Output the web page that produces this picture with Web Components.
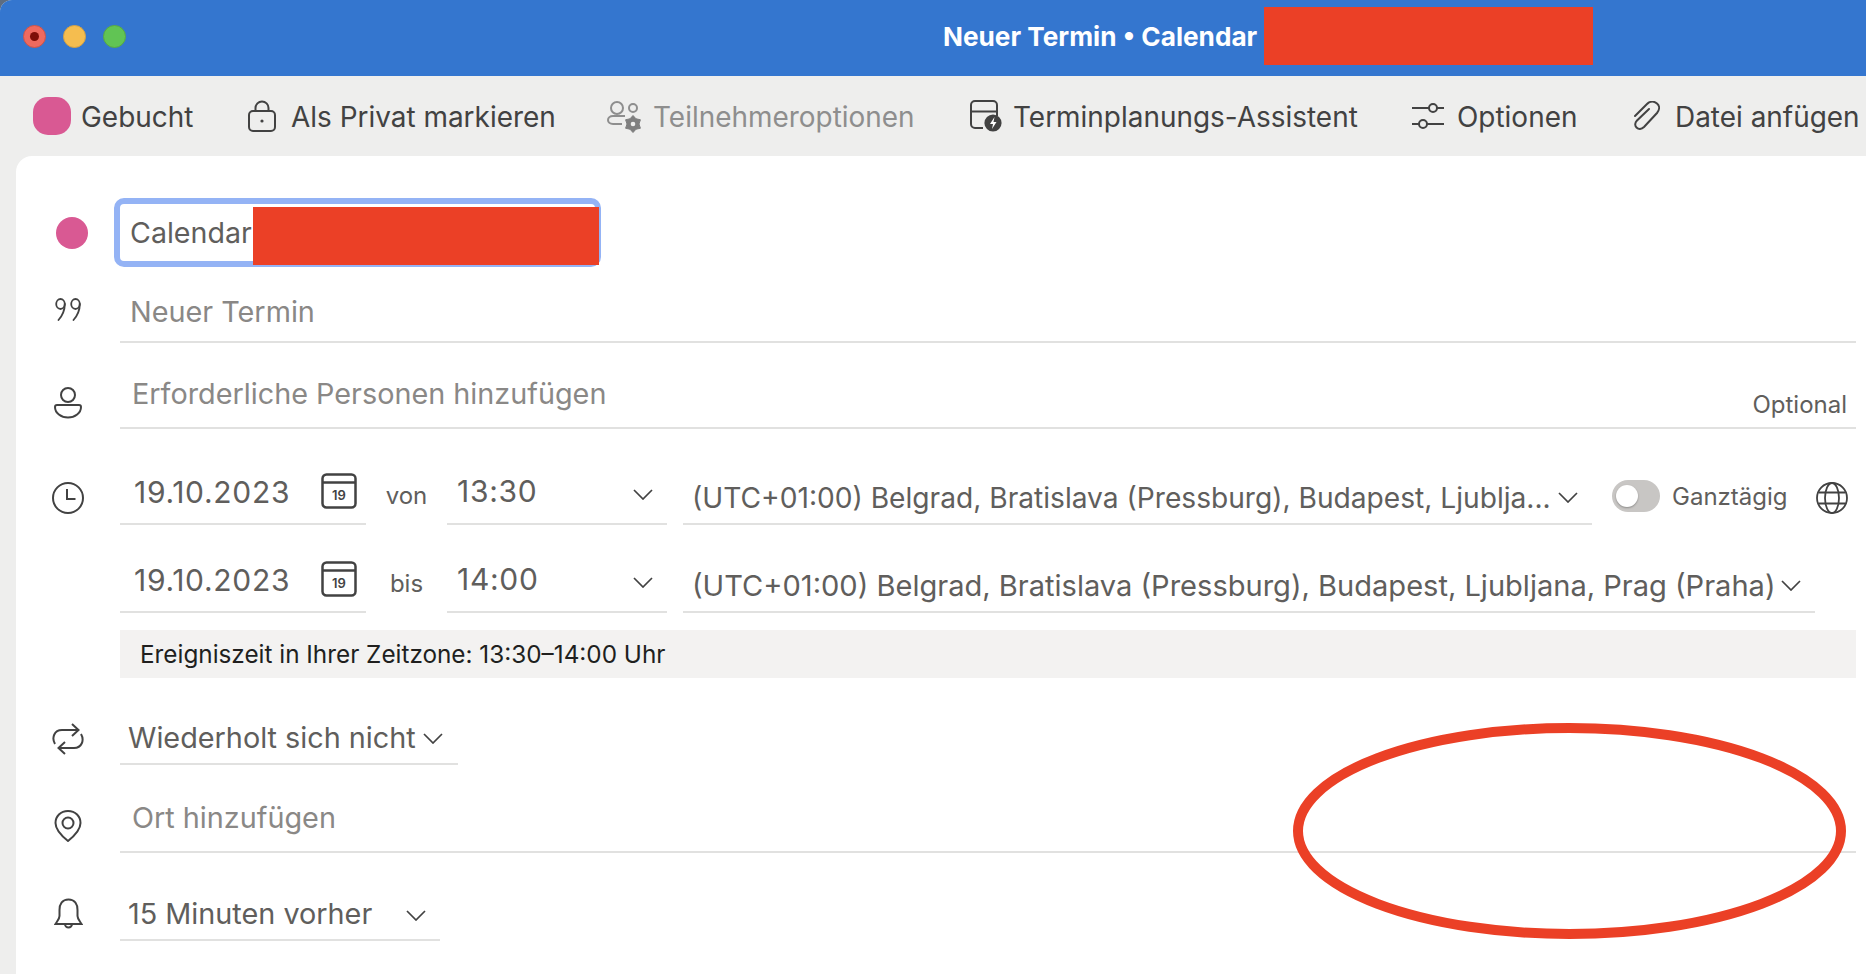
<!DOCTYPE html>
<html lang="de">
<head>
<meta charset="utf-8">
<title>Neuer Termin</title>
<style>
html,body{margin:0;padding:0;background:#5d6d82;}
body{font-family:Inter,"Liberation Sans",sans-serif;width:1866px;height:974px;overflow:hidden;}
svg{display:block;}
</style>
</head>
<body>
<app-window>
  <title-bar>
    <span slot="title">Neuer Termin • Calendar</span>
  </title-bar>
  <tool-bar>
    <tool-item style="margin-left:33px;width:165px;--g:10px">
      <span slot="icon" style="display:block;width:38px;height:38px;border-radius:15px;background:#d95993"></span>Gebucht
    </tool-item>
    <tool-item style="margin-left:50px;width:310px;--g:15px">
      <svg slot="icon" width="28" height="32" viewBox="0 0 28 32" fill="none" stroke="#424242" stroke-width="2"><rect x="1" y="11" width="26" height="20" rx="4"/><path d="M7.500 11V8a6.500 6.500 0 0 1 13 0v3"/><circle cx="14" cy="21" r="1.600" fill="#424242" stroke="none"/></svg>Als Privat markieren
    </tool-item>
    <tool-item disabled style="margin-left:49px;width:310px;--g:11px">
      <svg slot="icon" width="35" height="33" viewBox="0 0 35 33" fill="none" stroke="#8e8e8e" stroke-width="2"><circle cx="10" cy="8" r="6"/><circle cx="26" cy="8" r="4"/><path d="M18 16H6C3 16 1 18 1 20C1 22 3 24 6 24H15"/><polygon points="26,15.500 29,18.800 33.400,19.750 32,24 33.400,28.250 29,29.200 26,32.500 23,29.200 18.600,28.250 20,24 18.600,19.750 23,18.800" fill="#7f7f7f" stroke="#7f7f7f" stroke-width="1" stroke-linejoin="round"/><circle cx="26" cy="24" r="2.300" fill="#eeeeed" stroke="none"/></svg>Teilnehmeroptionen
    </tool-item>
    <tool-item style="margin-left:53px;width:392px;--g:11px">
      <svg slot="icon" width="32" height="32" viewBox="0 0 32 32" fill="none" stroke="#424242" stroke-width="2"><path d="M13 28H5a4 4 0 0 1-4-4V5a4 4 0 0 1 4-4h18a4 4 0 0 1 4 4v11"/><path d="M1 11.500h26"/><circle cx="23" cy="23" r="8.600" fill="#424242" stroke="none"/><path d="M24.500 17l-4.500 7h3l-1 5 4.500-7h-3z" fill="#fff" stroke="none"/></svg>Terminplanungs-Assistent
    </tool-item>
    <tool-item style="margin-left:50px;width:168px;--g:13px">
      <svg slot="icon" width="32" height="28" viewBox="0 0 32 28" fill="none" stroke="#424242" stroke-width="2"><path d="M0 6h17M25 6h7M0 22h7M15 22h17"/><circle cx="21" cy="6" r="4"/><circle cx="11" cy="22" r="4"/></svg>Optionen
    </tool-item>
    <tool-item style="margin-left:54px;width:228px;--g:15px">
      <svg slot="icon" width="26" height="30" viewBox="0 0 26 30" fill="none" stroke="#424242" stroke-width="2" stroke-linecap="round"><path d="M1 15L13 3C16 0 20 0 23 2.500C26 5 25.500 9 23 12L10 26C7.500 28.500 4.500 28.500 2.500 26.500C.5 24.500 1 21.500 3 19.500L15 8"/></svg>Datei anfügen
    </tool-item>
  </tool-bar>
  <form-panel>
    <form-row style="--h:69px;--top:19px">
      <span slot="icon" style="display:block;width:32px;height:32px;margin-left:8px;border-radius:50%;background:#d95993"></span>
      <subject-box>Calendar</subject-box>
    </form-row>
    <form-row style="--h:76px;--top:31px">
      <svg slot="icon" width="26" height="23" viewBox="0 0 26 23" fill="none" stroke="#424242" stroke-width="1.800" stroke-linecap="round"><ellipse cx="5.500" cy="6" rx="4.300" ry="5"/><path d="M9.800 6C9.800 12 7.500 17.500 3.500 22"/><ellipse cx="20.500" cy="6" rx="4.300" ry="5"/><path d="M24.800 6C24.800 12 22.500 17.500 18.500 22"/></svg>
      <form-field style="--pb:12px;--pl:10px;--c:#8a8886;flex:1">Neuer Termin</form-field>
    </form-row>
    <form-row style="--h:86px;--top:44px">
      <svg slot="icon" width="28" height="32" viewBox="0 0 28 32" fill="none" stroke="#424242" stroke-width="2"><circle cx="14" cy="8" r="7"/><path d="M3 18H25C26.500 18 27 19 27 20C27 26 21 30.500 14 30.500C7 30.500 1 26 1 20C1 19 1.500 18 3 18Z"/></svg>
      <form-field style="--pb:16px;--pl:12px;--c:#8a8886;--ib:8px;--ic:#605e5c;flex:1">Erforderliche Personen hinzufügen<span slot="end" style="font-size:24px;line-height:29px;margin-right:9px;display:block">Optional</span></form-field>
    </form-row>
    <form-row style="--h:96px;--top:53px">
      <svg slot="icon" width="32" height="32" viewBox="0 0 32 32" fill="none" stroke="#424242" stroke-width="2"><circle cx="16" cy="16" r="15"/><path d="M15 7v10h8.500"/></svg>
      <date-field style="--pb:14px" value="19.10.2023"></date-field>
      <field-label style="--pb:15px">von</field-label>
      <form-field style="--pb:15px;--pl:10px;--ib:23px;--pr:14px;--fs:30px;--ls:.7px;width:220px">13:30<chevron-icon slot="end"></chevron-icon></form-field>
      <form-field style="--pb:8px;--pl:9px;--ib:20px;--pr:14px;--fs:28.150px;width:909px;margin-left:16px;--gap:6px">(UTC+01:00) Belgrad, Bratislava (Pressburg), Budapest, Ljublja...<chevron-icon slot="end"></chevron-icon></form-field>
      <toggle-switch style="margin:0 0 13px 20px;align-self:flex-end"></toggle-switch>
      <field-label style="--pb:14px;--fw:auto;margin-left:12px">Ganztägig</field-label>
      <svg style="align-self:flex-end;margin:0 0 11px 28px" width="32" height="32" viewBox="0 0 32 32" fill="none" stroke="#424242" stroke-width="1.800"><circle cx="16" cy="16" r="15"/><ellipse cx="16" cy="16" rx="7" ry="15"/><path d="M2.500 10.500h27M2.500 21.500h27"/></svg>
    </form-row>
    <form-row style="--h:88px">
      <date-field style="--pb:14px" value="19.10.2023"></date-field>
      <field-label style="--pb:15px">bis</field-label>
      <form-field style="--pb:15px;--pl:10px;--ib:23px;--pr:14px;--fs:30px;--ls:.7px;width:220px">14:00<chevron-icon slot="end"></chevron-icon></form-field>
      <form-field style="--pb:8px;--pl:9px;--ib:20px;--pr:14px;--fs:29.050px;width:1132px;margin-left:16px">(UTC+01:00) Belgrad, Bratislava (Pressburg), Budapest, Ljubljana, Prag (Praha)<chevron-icon slot="end"></chevron-icon></form-field>
    </form-row>
    <info-bar>Ereigniszeit in Ihrer Zeitzone: 13:30–14:00 Uhr</info-bar>
    <form-row style="--h:87px;--top:45px">
      <svg slot="icon" width="32" height="32" viewBox="0 0 32 32" fill="none" stroke="#424242" stroke-width="2"><path d="M3 21C-.5 15 2 7 10 7H26M20 1L26.500 7L20 13"/><path d="M29 11C32.500 17 30 25 22 25H6M13 19L6.500 25L13 31"/></svg>
      <form-field style="--pb:8px;--pl:8px;--pr:13px;--ib:19px;width:338px;--gap:7px;justify-content:flex-start">Wiederholt sich nicht<chevron-icon slot="end"></chevron-icon></form-field>
    </form-row>
    <form-row style="--h:88px;--top:45px">
      <svg slot="icon" width="28" height="32" viewBox="0 0 28 32" fill="none" stroke="#424242" stroke-width="2"><path d="M14 1C6.500 1 1.500 6.500 1.500 13C1.500 20 9 27 14 31C19 27 26.500 20 26.500 13C26.500 6.500 21.500 1 14 1Z"/><circle cx="14" cy="13" r="5.500"/></svg>
      <form-field style="--pb:16px;--pl:12px;--c:#8a8886;flex:1">Ort hinzufügen</form-field>
    </form-row>
    <form-row style="--h:88px;--top:45px">
      <svg slot="icon" width="29" height="31" viewBox="0 0 29 31" fill="none" stroke="#424242" stroke-width="2"><path d="M14.500 1.500C8 1.500 5.500 6.500 5.500 12V18C5.500 21 3 23.500 1.500 26H27.500C26 23.500 23.500 21 23.500 18V12C23.500 6.500 21 1.500 14.500 1.500Z"/><path d="M11 26a3.500 3.500 0 0 0 7 0"/></svg>
      <form-field style="--pb:8px;--pl:8px;--pr:14px;--ib:18px;width:320px">15 Minuten vorher<chevron-icon slot="end"></chevron-icon></form-field>
    </form-row>
    <annotation-ring></annotation-ring>
  </form-panel>
</app-window>

<script>
function define(name, css, html, init){
  customElements.define(name, class extends HTMLElement{
    constructor(){
      super();
      const r=this.attachShadow({mode:'open'});
      r.innerHTML='<style>'+css+'</style>'+html;
    }
    connectedCallback(){ if(init) init(this); }
  });
}
define('app-window',
  ':host{display:flex;flex-direction:column;width:1866px;height:974px;background:#eeeeed;border-top-left-radius:12px;overflow:hidden;font-family:Inter,"Liberation Sans",sans-serif}',
  '<slot></slot>');
define('title-bar',
  ':host{display:flex;align-items:center;height:76px;box-sizing:border-box;padding-bottom:4px;flex:none;background:#3476cf;color:#fff;font-size:26.2px;font-weight:700}'+
  '.dot{width:23px;height:23px;border-radius:50%;box-sizing:border-box;margin-right:17px;display:flex;align-items:center;justify-content:center}'+
  '.r{background:#ee6a5f;border:1px solid #ce5347;margin-left:23px}.r i{display:block;width:9px;height:9px;border-radius:50%;background:#7e0f08}'+
  '.y{background:#f5bd4f;border:1px solid #d6a243}.g{background:#61c454;border:1px solid #58a942}'+
  '.t{margin-left:800px;white-space:nowrap;width:321px}'+
  '.red{width:329px;height:58px;background:#eb4026}',
  '<span class="dot r"><i></i></span><span class="dot y"></span><span class="dot g"></span><span class="t"><slot name="title"></slot></span><span class="red"></span>');
define('tool-bar',
  ':host{display:flex;align-items:center;height:80px;flex:none;background:#eeeeed}',
  '<slot></slot>');
define('tool-item',
  ':host{display:flex;align-items:center;gap:var(--g,10px);flex:none;font-size:27.95px;line-height:34px;color:#424242;white-space:nowrap;box-sizing:border-box}'+
  ':host([disabled]){color:#8e8e8e}span{position:relative;top:1px}::slotted([slot=icon]){flex:none}',
  '<slot name="icon"></slot><span><slot></slot></span>');
define('form-panel',
  ':host{display:block;position:relative;flex:1;margin-left:16px;padding:42px 10px 0 0;background:#fff;border-top-left-radius:16px;color:#605e5c;font-size:28.8px}',
  '<slot></slot>');
define('form-row',
  ':host{display:flex;height:var(--h);align-items:stretch}'+
  '.ic{flex:none;width:104px;box-sizing:border-box;padding-top:var(--top,0);display:flex;justify-content:center;align-items:flex-start}'+
  '.c{flex:1;min-width:0;display:flex;align-items:stretch}',
  '<div class="ic"><slot name="icon"></slot></div><div class="c"><slot></slot></div>');
define('form-field',
  ':host{display:flex;align-items:flex-end;justify-content:space-between;gap:var(--gap,0);box-sizing:border-box;border-bottom:2px solid #e1e1e0;padding:0 var(--pr,0) 0 var(--pl,0);color:var(--c,#605e5c);line-height:34px;white-space:nowrap;font-size:var(--fs,inherit);letter-spacing:var(--ls,0)}'+
  '.t{padding-bottom:var(--pb,0)}.e{padding-bottom:var(--ib,0);color:var(--ic,inherit);letter-spacing:0}',
  '<span class="t"><slot></slot></span><span class="e"><slot name="end"></slot></span>');
define('date-field',
  ':host{display:flex;flex:none;width:246px;box-sizing:border-box;align-items:flex-end;justify-content:space-between;border-bottom:2px solid #e1e1e0;padding:0 9px 0 14px;color:#605e5c;line-height:34px;font-size:30px;letter-spacing:.7px}'+
  '.t{padding-bottom:var(--pb,0)}svg{margin-bottom:14px;display:block}',
  '<span class="t"></span><svg width="36" height="36" viewBox="0 0 36 36" fill="none" stroke="#424242" stroke-width="2.500"><rect x="1.500" y="1.500" width="33" height="33" rx="4"/><path d="M1.500 9.500h33"/><text x="18" y="27" text-anchor="middle" font-family="Inter, Liberation Sans, sans-serif" font-size="13" font-weight="600" letter-spacing="0" fill="#424242" stroke="none">19</text></svg>',
  el=>{el.shadowRoot.querySelector('.t').textContent=el.getAttribute('value');});
define('field-label',
  ':host{display:flex;flex:none;width:var(--fw,81px);justify-content:center;align-items:flex-end;font-size:24px;line-height:29px;color:#605e5c;padding-bottom:var(--pb,0);box-sizing:border-box}',
  '<slot></slot>');
define('chevron-icon',
  ':host{display:block;width:20px;height:11px}svg{display:block}',
  '<svg width="20" height="11" viewBox="0 0 20 11" fill="none" stroke="#424242" stroke-width="1.700"><path d="M1 1l9 9 9-9"/></svg>');
define('subject-box',
  ':host{display:flex;align-items:center;position:relative;box-sizing:border-box;flex:none;margin-left:-6px;width:487px;height:69px;border:6px solid #94b3f5;border-radius:10px;padding-left:10px;color:#605e5c;background:#fff;font-size:28.6px}'+
  '.red{position:absolute;left:133px;top:3px;width:346px;height:58px;background:#eb4026}',
  '<slot></slot><span class="red"></span>');
define('info-bar',
  ':host{display:flex;align-items:center;margin:17px 0 0 104px;height:48px;padding-left:20px;background:#f3f2f1;color:#201f1e;font-size:24.3px}',
  '<slot></slot>');
define('toggle-switch',
  ':host{display:flex;align-items:center;flex:none;width:48px;height:32px;border-radius:16px;background:#c8c6c4;padding-left:4px;box-sizing:border-box}'+
  'i{display:block;width:22px;height:22px;border-radius:50%;background:#fff;box-shadow:0 1px 2px rgba(0,0,0,.3)}',
  '<i></i>');
define('annotation-ring',
  ':host{position:absolute;left:1277px;top:567px;width:553px;height:216px}svg{display:block}',
  '<svg width="553" height="216" viewBox="0 0 553 216" fill="none"><ellipse cx="276.500" cy="108" rx="271.500" ry="103" stroke="#eb4026" stroke-width="10"/></svg>');
</script>
</body>
</html>
